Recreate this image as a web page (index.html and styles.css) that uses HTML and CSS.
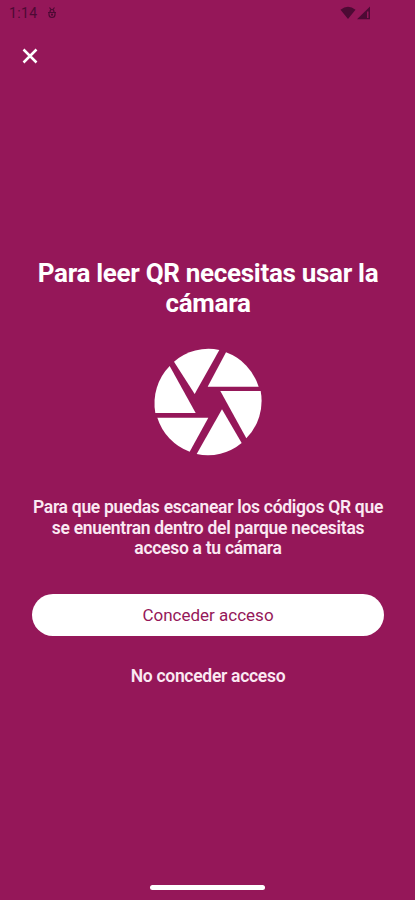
FILE: index.html
```html
<!DOCTYPE html>
<html lang="es">
<head>
<meta charset="utf-8">
<title>Acceso a la cámara</title>
<link rel="stylesheet" href="styles.css">
</head>
<body>
<div class="screen">
  <header class="status">
    <span class="time">1:14</span>
    <svg class="debug" viewBox="0 0 10 12"><path d="M2.500 .5l1.500 2M7.500 .5L6 2.500M1 5.500h8M2 5.500v2q0 3 3 3t3-3v-2M3 5q0-2.500 2-2.500T7 5" fill="none" stroke="currentColor" stroke-width="1.200"/><circle cx="5" cy="7.700" r="1.100" fill="currentColor"/></svg>
    <svg class="signals" viewBox="0 0 32 14"><path d="M.5 3.800Q8-2.400 15.500 3.800L8 13z" fill="currentColor"/><path d="M17 13.300L30 .5v12.800z" fill="currentColor"/><path d="M27 5.500h1.500v6.500h-1.500z" class="gap"/></svg>
  </header>
  <button class="close" aria-label="Cerrar"><svg viewBox="0 0 16 16"><path d="M1.500 1.500l13 13M14.500 1.500l-13 13" stroke="currentColor" stroke-width="2.500"/></svg></button>
  <main>
    <h1>Para leer QR necesitas usar la<br>cámara</h1>
    <svg class="shutter" viewBox="0 0 378 378" fill="currentColor">
      <path d="M87 65A159 160 0 0 1 223 30L149 162z"/>
      <path d="M243 37A159 160 0 0 1 341 140H188z"/>
      <path d="M347 153A159 160 0 0 1 304 295L226 153z"/>
      <path d="M290 309A159 160 0 0 1 155 342L231 208z"/>
      <path d="M134 335A159 160 0 0 1 37 233H190z"/>
      <path d="M31 219A159 160 0 0 1 74 78L152 219z"/>
    </svg>
    <p>Para que puedas escanear los códigos QR que<br>se enuentran dentro del parque necesitas<br>acceso a tu cámara</p>
    <button class="grant">Conceder acceso</button>
    <button class="deny">No conceder acceso</button>
  </main>
  <div class="homebar"></div>
</div>
</body>
</html>
```
FILE: styles.css
```css
* { box-sizing: border-box; }
body { margin: 0; }
button { border: 0; padding: 0; background: none; font: inherit; color: inherit; }
svg { display: block; }
.screen {
  height: 900px;
  display: flex;
  flex-direction: column;
  background: #951759;
  color: #fff;
  font-family: Roboto, sans-serif;
}
.status {
  display: flex;
  align-items: center;
  height: 26px;
  padding: 0 43px 0 9px;
  color: #4d0a34;
}
.time { font-size: 14px; letter-spacing: 0.4px; }
.debug { width: 10px; height: 12px; margin-left: 9px; }
.signals { width: 32px; height: 14px; margin-left: auto; }
.gap { fill: #951759; }
.close { width: 16px; height: 16px; margin: 22px 0 0 22px; }
main {
  display: flex;
  flex-direction: column;
  align-items: center;
  padding: 194px 31px 0 32px;
  text-align: center;
}
h1 { margin: 0; font-size: 26px; line-height: 30px; font-weight: 700; letter-spacing: -0.3px; white-space: nowrap; }
.shutter { width: 126px; height: 126px; margin-top: 22px; }
p { margin: 31px 0 0; font-size: 17.500px; line-height: 20.500px; font-weight: 600; letter-spacing: -0.290px; white-space: nowrap; color: #fbe9f3; }
.grant {
  width: 352px;
  height: 42px;
  margin-top: 35px;
  border-radius: 21px;
  background: #fff;
  color: #951759;
  font-size: 17px;
  font-weight: 450;
}
.deny { margin-top: 30px; font-size: 17.500px; line-height: 21px; font-weight: 600; letter-spacing: -0.290px; color: #fbe9f3; }
.homebar { width: 115px; height: 5px; margin: auto auto 10px 150px; border-radius: 3px; background: #fff; }
```
